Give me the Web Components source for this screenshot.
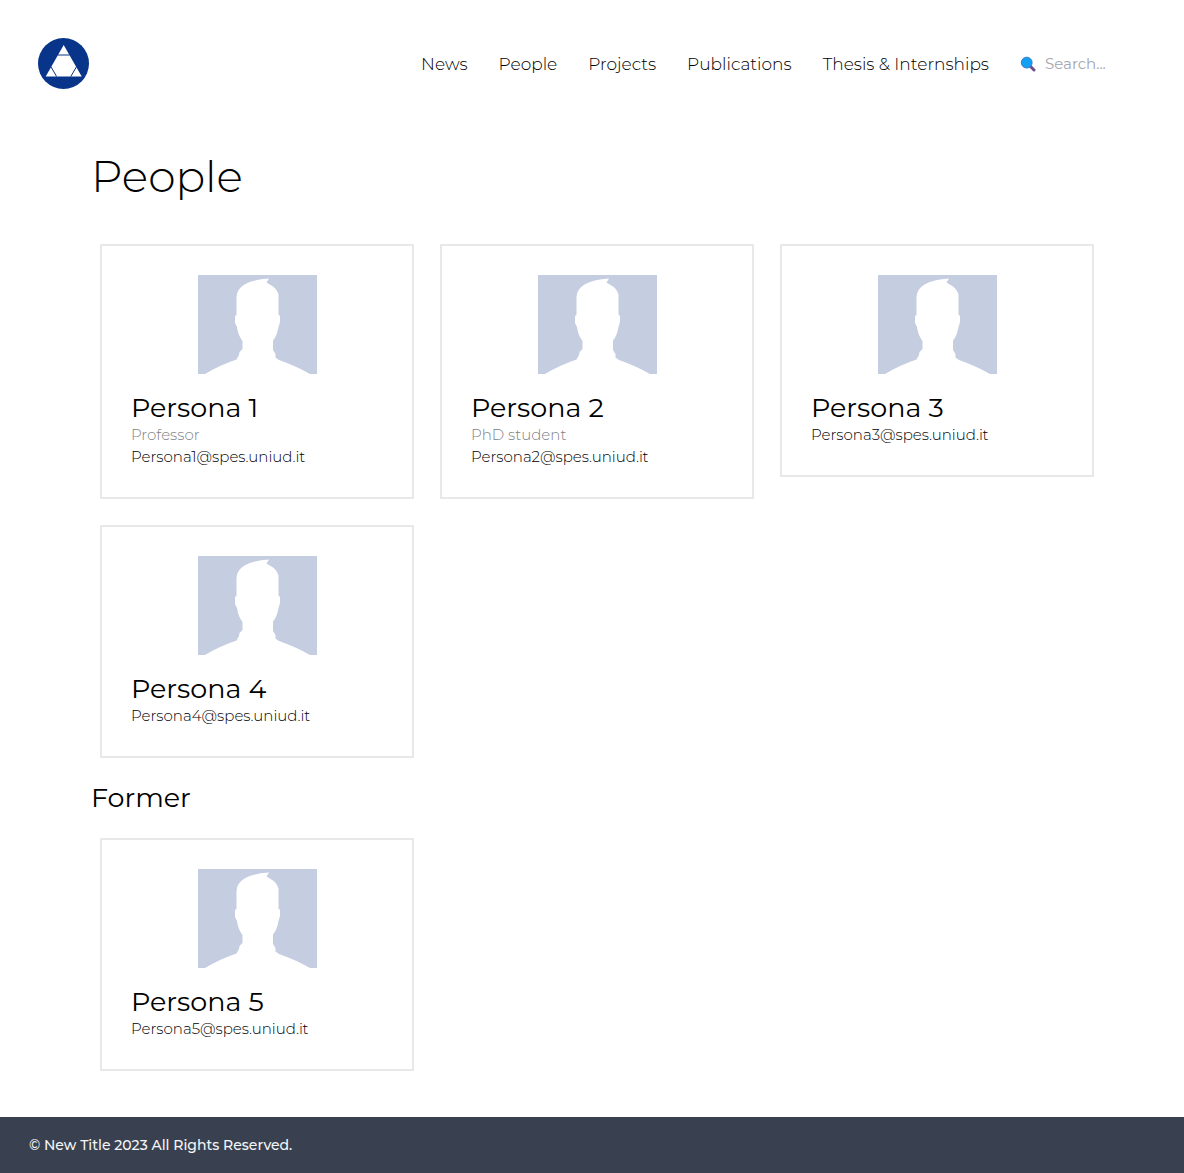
<!DOCTYPE html>
<html lang="en">
<head>
<meta charset="utf-8">
<meta name="viewport" content="width=device-width, initial-scale=1">
<title>People</title>
<style>
  body { margin: 0; background: #fff; color: #000; font-family: Montserrat, Inter, "Open Sans", sans-serif; font-weight: 300; }
</style>
</head>
<body>
<people-page></people-page>
<script>
const define = (name, html) => {
  const template = document.createElement('template');
  template.innerHTML = html;
  customElements.define(name, class extends HTMLElement {
    constructor() {
      super();
      this.attachShadow({ mode: 'open' }).append(template.content.cloneNode(true));
    }
  });
};

define('site-logo', `
<style>
  :host { display: block; }
  a, svg { display: block; width: 52px; height: 52px; }
</style>
<a href="#" aria-label="Home">
  <svg viewBox="0 0 52 52" aria-hidden="true">
    <circle cx="25.5" cy="25.5" r="25.5" fill="#08358a"/>
    <path d="M25.7 7 43.7 38.5H7.7Z" fill="#fff"/>
    <path d="M19.7 17H31.7M12.8 28.5 18.6 38.5M38.6 28.5 32.8 38.5" stroke="#08358a" stroke-width="1"/>
  </svg>
</a>`);

define('nav-link', `
<style>
  :host { display: block; }
  a { display: block; color: #000; text-decoration: none; font-size: 17px; line-height: 24px; white-space: nowrap; }
</style>
<a href="#"><slot></slot></a>`);

define('site-search', `
<style>
  :host { display: flex; }
  label { display: flex; align-items: center; gap: 9px; }
  svg { display: block; width: 16px; height: 16px; }
  input { width: 101px; height: 24px; padding: 0; border: 0; outline: 0; background: none; color: #26282c; font: inherit; font-weight: 400; font-size: 15px; line-height: 24px; }
  input::placeholder { color: #a3a6ae; opacity: 1; }
</style>
<label>
  <svg viewBox="0 0 16 16" aria-hidden="true">
    <path d="M10.3 10.3 14 14" stroke="#6c4f91" stroke-width="3" stroke-linecap="round"/>
    <circle cx="6.7" cy="6.6" r="5.4" fill="#12a0f5" stroke="#3a78bd" stroke-width="1"/>
  </svg>
  <input type="text" placeholder="Search..." aria-label="Search">
</label>`);

define('site-header', `
<style>
  :host { display: flex; align-items: center; justify-content: space-between; padding: 38px; }
  nav { display: flex; align-items: center; gap: 31px; }
</style>
<site-logo></site-logo>
<nav>
  <nav-link>News</nav-link>
  <nav-link>People</nav-link>
  <nav-link>Projects</nav-link>
  <nav-link>Publications</nav-link>
  <nav-link>Thesis &amp; Internships</nav-link>
  <site-search></site-search>
</nav>`);

define('person-avatar', `
<style>
  :host { display: block; }
  svg { display: block; width: 119px; height: 99px; margin: 0 auto; }
</style>
<svg viewBox="0 0 119 99" role="img" aria-label="Portrait">
  <path d="M0 0H119V99H112Q98 91 81 85L77.5 82.5 77.5 79 75 75V65.5Q79 61 80.5 52L82 47V41L80.5 39.5V20Q79.5 15 75 11.5L68.5 7.500 71 3.5Q55 4.5 46.5 9.5 38.5 14.5 38.5 22V40L37 41V48L39 52Q40 60 44.5 66V74L41.5 77 41 80 38.5 84.5Q22 90 7 99H0Z" fill="#c5cde0"/>
</svg>`);

define('person-card', `
<style>
  :host { display: block; border: 2px solid #e8e8ea; padding: 29px; }
  h3 { margin: 18px 0 0; font-size: 27px; line-height: 32px; font-weight: 400; }
  ::slotted([slot=role]), ::slotted(a) { display: block; font-size: 15px; line-height: 22px; }
  ::slotted([slot=role]) { color: #808286; }
  ::slotted(a) { color: #000; text-decoration: none; }
</style>
<person-avatar></person-avatar>
<h3><slot name="name"></slot></h3>
<slot name="role"></slot>
<slot name="email"></slot>`);

define('card-grid', `
<style>
  :host { display: grid; grid-template-columns: repeat(3, minmax(0, 1fr)); align-items: start; gap: 26px; padding: 0 9px; }
  @media (max-width: 900px) { :host { grid-template-columns: 1fr; } }
</style>
<slot></slot>`);

define('site-footer', `
<style>
  :host { display: block; padding: 16px 29px; background: #394150; color: #f4f5f7; font-size: 14px; line-height: 24px; font-weight: 500; }
</style>
<slot></slot>`);

define('people-page', `
<style>
  :host { display: flex; flex-direction: column; min-height: 100vh; }
  main { flex: 1; padding: 22px 81px 46px 91px; }
  h1 { margin: 0 0 42px; font-size: 44px; line-height: 52px; font-weight: 300; }
  h2 { margin: 24px 0; font-size: 27px; line-height: 32px; font-weight: 400; }
</style>
<site-header></site-header>
<main>
  <h1>People</h1>
  <card-grid>
    <person-card><span slot="name">Persona 1</span><span slot="role">Professor</span><a slot="email" href="mailto:Persona1@spes.uniud.it">Persona1@spes.uniud.it</a></person-card>
    <person-card><span slot="name">Persona 2</span><span slot="role">PhD student</span><a slot="email" href="mailto:Persona2@spes.uniud.it">Persona2@spes.uniud.it</a></person-card>
    <person-card><span slot="name">Persona 3</span><a slot="email" href="mailto:Persona3@spes.uniud.it">Persona3@spes.uniud.it</a></person-card>
    <person-card><span slot="name">Persona 4</span><a slot="email" href="mailto:Persona4@spes.uniud.it">Persona4@spes.uniud.it</a></person-card>
  </card-grid>
  <h2>Former</h2>
  <card-grid>
    <person-card><span slot="name">Persona 5</span><a slot="email" href="mailto:Persona5@spes.uniud.it">Persona5@spes.uniud.it</a></person-card>
  </card-grid>
</main>
<site-footer>© New Title 2023 All Rights Reserved.</site-footer>`);
</script>
</body>
</html>
